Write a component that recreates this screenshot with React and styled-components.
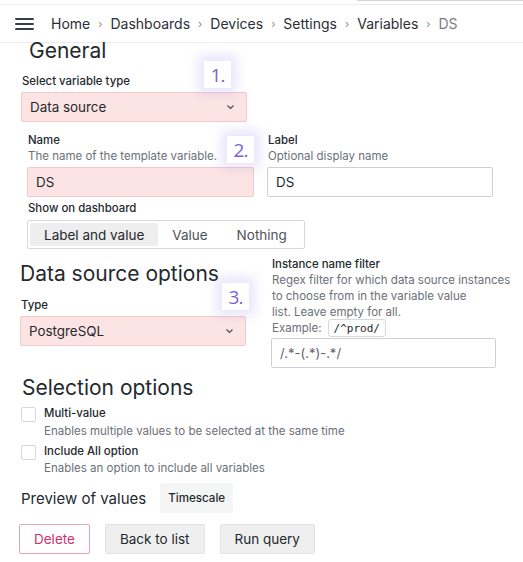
import React from "react"
import styled, { createGlobalStyle } from "styled-components"

const Global = createGlobalStyle`
  html, body { margin: 0; padding: 0; background: #fff; }
  body {
    font-family: Inter, "Noto Sans", "Liberation Sans", sans-serif;
    color: #24292e;
    width: 523px;
    height: 562px;
    overflow: hidden;
  }
  * { box-sizing: border-box; }
`

const Page = styled.div`
  position: relative;
  width: 523px;
  height: 562px;
  overflow: hidden;
`

const TopStrip = styled.div`
  height: 5px;
  border-bottom: 1px solid #ececec;
  display: flex;
  justify-content: flex-end;
`

const TopBar = styled.div`
  width: 166px;
  height: 1px;
  background: #d6d6d6;
`

const Header = styled.header`
  height: 38px;
  display: flex;
  align-items: center;
  padding-left: 15px;
  border-bottom: 1px solid #ececec;
`

const Burger = styled.div`
  width: 19px;
  display: flex;
  flex-direction: column;
  gap: 3px;
  margin-right: 17px;
  span {
    height: 2px;
    background: #3a3d42;
    border-radius: 1px;
  }
`

const Crumb = styled.span`
  font-size: 14px;
  color: ${p => (p.$last ? "#7b7f86" : "#2b2f35")};
`

const Sep = styled.span`
  font-size: 11px;
  color: #8a8e94;
  margin: 0 8px;
`

const Content = styled.div`
  padding-left: 20px;
`

const H2 = styled.h2`
  margin: ${p => p.$mt || 0}px 0 0 ${p => p.$indent || 0}px;
  font-weight: 400;
  font-size: 21px;
  line-height: 22px;
  color: #24292e;
  white-space: nowrap;
`

const Label = styled.div`
  font-size: 11.4px;
  font-weight: 500;
  line-height: 16px;
  color: #24292e;
  padding-left: 1px;
  white-space: nowrap;
`

const Desc = styled.div`
  font-size: 11.5px;
  line-height: 16px;
  color: #6c7077;
  padding-left: 1px;
  margin-top: ${p => p.$mt || 0}px;
  white-space: nowrap;
`

const Field = styled.div`
  width: ${p => p.$w || 226}px;
  height: 30px;
  margin-top: ${p => p.$mt ?? 3}px;
  border: 1px solid ${p => (p.$err ? "#f2c9c9" : "#cfd1d4")};
  background: ${p => (p.$err ? "#fde4e4" : "#fff")};
  border-radius: 2px;
  display: flex;
  align-items: center;
  justify-content: space-between;
  padding: 0 11px 0 8px;
  font-size: 13.4px;
  color: #24292e;
`

const Placeholder = styled.span`
  color: #5f636a;
  font-size: 13px;
`

const Chevron = () => (
  <svg width="9" height="6" viewBox="0 0 9 6">
    <path d="M1.5 1.5 L4.5 4.5 L7.5 1.5" fill="none" stroke="#4a4e55" strokeWidth="1.2" />
  </svg>
)

const Row = styled.div`
  display: flex;
  gap: ${p => p.$gap || 14}px;
  align-items: ${p => (p.$center ? "center" : "flex-start")};
  margin-top: ${p => p.$mt || 0}px;
  margin-left: ${p => p.$ml || 0}px;
  padding-left: ${p => p.$pl || 0}px;
`

const Col = styled.div`
  display: flex;
  flex-direction: column;
  flex-shrink: 0;
  margin-top: ${p => p.$mt || 0}px;
  padding-left: ${p => p.$pl || 0}px;
  padding-top: ${p => p.$pt || 0}px;
  width: ${p => (p.$w ? p.$w + "px" : "auto")};
`

const Segmented = styled.div`
  display: inline-flex;
  align-self: flex-start;
  height: 29px;
  border: 1px solid #d6d8db;
  border-radius: 2px;
  padding: 2px;
  margin-top: 4px;
`

const Seg = styled.div`
  height: 23px;
  padding: 0 ${p => p.$px || 14}px;
  display: flex;
  align-items: center;
  white-space: nowrap;
  font-size: 13.5px;
  border-radius: 2px;
  background: ${p => (p.$active ? "#eeeeef" : "transparent")};
  color: ${p => (p.$active ? "#24292e" : "#4f535a")};
`

const ExampleLine = styled.div`
  display: flex;
  align-items: center;
  height: 18px;
  margin-top: -1px;
  font-size: 11.5px;
  color: #6c7077;
  padding-left: 1px;
`

const Code = styled.span`
  display: inline-flex;
  align-items: center;
  height: 18px;
  font-family: "DejaVu Sans Mono", "Liberation Mono", monospace;
  font-size: 11px;
  border: 1px solid #d6d8db;
  border-radius: 3px;
  padding: 0 5px;
  margin-left: 6px;
  color: #24292e;
  background: #fff;
`

const CheckRow = styled.div`
  display: flex;
  gap: 7px;
  align-items: flex-start;
  margin-top: ${p => p.$mt || 0}px;
`

const Box = styled.div`
  width: 15px;
  height: 15px;
  margin-top: 2px;
  border: 1px solid #d6d8db;
  border-radius: 2px;
  flex-shrink: 0;
`

const PreviewTitle = styled.span`
  font-size: 15px;
  color: #24292e;
`

const Chip = styled.div`
  height: 30px;
  padding: 0 8px;
  display: flex;
  align-items: center;
  background: #f4f5f5;
  font-size: 11.6px;
  font-weight: 500;
  color: #24292e;
  border-radius: 2px;
`

const Button = styled.button`
  height: 30px;
  padding: 0 14px;
  font-family: inherit;
  font-size: 13.5px;
  border-radius: 2px;
  border: 1px solid ${p => (p.$danger ? "#e4a2bb" : "#e1e2e4")};
  background: ${p => (p.$danger ? "#fff" : "#efefef")};
  color: ${p => (p.$danger ? "#d0316f" : "#24292e")};
`

const Badge = styled.div`
  position: absolute;
  width: 27px;
  height: 27px;
  left: ${p => p.$x}px;
  top: ${p => p.$y}px;
  background: #fff;
  box-shadow: 0 0 10px 6px rgba(160, 140, 240, 0.22);
  display: flex;
  align-items: center;
  justify-content: center;
  font-family: "Open Sans", "Liberation Sans", sans-serif;
  font-size: 19px;
  letter-spacing: -1px;
  color: #7c5fd1;
`

const crumbs = ["Home", "Dashboards", "Devices", "Settings", "Variables"]

export default function App() {
  return (
    <Page>
      <Global />
      <TopStrip>
        <TopBar />
      </TopStrip>
      <Header>
        <Burger>
          <span />
          <span />
          <span />
        </Burger>
        {crumbs.map(c => (
          <React.Fragment key={c}>
            <Crumb>{c}</Crumb>
            <Sep>›</Sep>
          </React.Fragment>
        ))}
        <Crumb $last>DS</Crumb>
      </Header>

      <Content>
        <H2 $indent={9} $mt={-3}>General</H2>
        <Col $pl={1} $mt={11}>
          <Label>Select variable type</Label>
          <Field $err $w={226}>
            <span>Data source</span>
            <Chevron />
          </Field>
        </Col>

        <Row $gap={13} $mt={10} $pl={7}>
          <Col $w={227}>
            <Label>Name</Label>
            <Desc>The name of the template variable.</Desc>
            <Field $err $w={227} $mt={3}>
              <span>DS</span>
            </Field>
          </Col>
          <Col>
            <Label>Label</Label>
            <Desc>Optional display name</Desc>
            <Field $w={226} $mt={3}>
              <span>DS</span>
            </Field>
          </Col>
        </Row>

        <Col $pl={7} $mt={3}>
          <Label>Show on dashboard</Label>
          <Segmented>
            <Seg $active $px={14}>Label and value</Seg>
            <Seg $px={14}>Value</Seg>
            <Seg $px={15}>Nothing</Seg>
          </Segmented>
        </Col>

        <Row $gap={24} $mt={7}>
          <Col $w={227} $pt={7}>
            <H2>Data source options</H2>
            <Col $mt={12}>
              <Label>Type</Label>
              <Field $err $w={226}>
                <span>PostgreSQL</span>
                <Chevron />
              </Field>
            </Col>
          </Col>
          <Col $w={245}>
            <Label>Instance name filter</Label>
            <Desc>Regex filter for which data source instances</Desc>
            <Desc>to choose from in the variable value</Desc>
            <Desc>list. Leave empty for all.</Desc>
            <ExampleLine>
              Example:<Code>/^prod/</Code>
            </ExampleLine>
            <Field $w={225} $mt={1}>
              <Placeholder>/.*-(.*)-.*/</Placeholder>
            </Field>
          </Col>
        </Row>

        <H2 $indent={2} $mt={9}>Selection options</H2>
        <Col $pl={1} $mt={6}>
          <CheckRow>
            <Box />
            <Col>
              <Label>Multi-value</Label>
              <Desc $mt={2}>Enables multiple values to be selected at the same time</Desc>
            </Col>
          </CheckRow>
          <CheckRow $mt={4}>
            <Box />
            <Col>
              <Label>Include All option</Label>
              <Desc $mt={1}>Enables an option to include all variables</Desc>
            </Col>
          </CheckRow>
        </Col>

        <Row $gap={14} $center $mt={7} $pl={1}>
          <PreviewTitle>Preview of values</PreviewTitle>
          <Chip>Timescale</Chip>
        </Row>

        <Row $gap={15} $mt={11} $ml={-1}>
          <Button $danger>Delete</Button>
          <Button>Back to list</Button>
          <Button>Run query</Button>
        </Row>
      </Content>

      <Badge $x={204} $y={61}>1.</Badge>
      <Badge $x={227} $y={136}>2.</Badge>
      <Badge $x={222} $y={283}>3.</Badge>
    </Page>
  )
}
